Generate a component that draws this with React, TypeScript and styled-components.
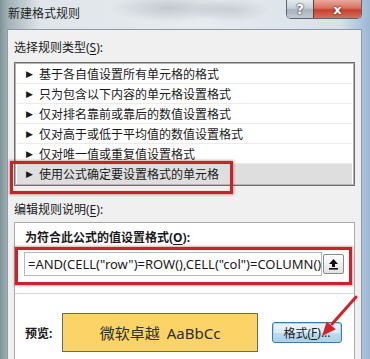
import React from "react";
import styled, { createGlobalStyle } from "styled-components";

const Global = createGlobalStyle`
  html, body { margin: 0; padding: 0; }
  body { width: 370px; height: 359px; overflow: hidden; background: #ffffff; }
  * { box-sizing: border-box; }
`;

const FONT = `"Noto Sans", "Noto Sans CJK SC", sans-serif`;

const Window = styled.div`
  position: relative;
  width: 370px;
  height: 359px;
  overflow: hidden;
  display: flex;
  flex-direction: column;
  font-family: ${FONT};
  font-size: 12px;
  color: #1a1a1a;
  background: linear-gradient(90deg, #7f9397 0px, #9fb0b5 7px, #dfe5ea 40px, #e6ebef 200px, #d9e1e8 340px, #a9c2dc 362px, #9db7d4 370px);
`;

const TitleBar = styled.div`
  flex: none;
  height: 29px;
  display: flex;
  align-items: flex-start;
  padding-left: 8px;
  background: radial-gradient(ellipse 60px 14px at 170px 8px, rgba(90, 100, 110, 0.25), transparent),
    radial-gradient(ellipse 40px 12px at 230px 10px, rgba(90, 100, 110, 0.2), transparent);
`;

const Title = styled.div`
  margin-top: 6px;
  line-height: 16px;
  font-size: 12px;
  color: #1e1e1e;
`;

const Captions = styled.div`
  margin-left: auto;
  margin-right: 8px;
  display: flex;
  height: 19px;
  border: 1px solid #5b6470;
  border-top: none;
  border-radius: 0 0 5px 5px;
  overflow: hidden;
`;

const CaptionButton = styled.div<{ $close?: boolean }>`
  width: ${(p) => (p.$close ? 48 : 26)}px;
  height: 100%;
  display: flex;
  align-items: center;
  justify-content: center;
  font-family: "DejaVu Sans", sans-serif;
  font-weight: bold;
  font-size: ${(p) => (p.$close ? 13 : 14)}px;
  color: #ffffff;
  text-shadow: 0 0 2px #333, 0 0 1px #333;
  border-left: ${(p) => (p.$close ? "1px solid #6b3a34" : "none")};
  background: ${(p) =>
    p.$close
      ? "linear-gradient(180deg, #e9a99c 0%, #d9705f 45%, #c4402c 55%, #d8705e 100%)"
      : "linear-gradient(180deg, #e6eaee 0%, #c7cfd7 45%, #a9b3bd 55%, #c2cbd3 100%)"};
`;

const Client = styled.div`
  flex: 1;
  margin: 0 8px 0 7px;
  background: #f0f0f0;
  border: 1px solid #8d99a5;
  border-bottom: none;
  padding: 0 6px;
  display: flex;
  flex-direction: column;
`;

const SectionLabel = styled.div<{ $top: number }>`
  margin-top: ${(p) => p.$top}px;
  line-height: 16px;
  font-size: 12px;
  color: #1a1a1a;
`;

const Key = styled.span`
  text-decoration: underline;
  text-underline-offset: 2px;
`;

const ListBox = styled.div`
  margin-top: 6px;
  border: 1px solid #6f6f6f;
  box-shadow: inset 0 0 0 1px #b4b4b4;
  background: #ffffff;
  padding: 1px 2px 1px 2px;
`;

const ListRow = styled.div<{ $selected?: boolean; $last?: boolean }>`
  position: relative;
  height: 20px;
  display: flex;
  align-items: center;
  padding-left: 9px;
  font-size: 12px;
  color: #1a1a1a;
  background: ${(p) => (p.$selected ? "#dedede" : "transparent")};
  border-bottom: ${(p) => (p.$last ? "none" : "1px solid #ebebeb")};
`;

const Arrow = styled.span`
  font-family: "DejaVu Sans", sans-serif;
  font-size: 9px;
  width: 13px;
  color: #1a1a1a;
`;

const RedMark = styled.div<{ $l: number; $t: number; $w?: number; $r?: number; $b: number }>`
  position: absolute;
  left: ${(p) => p.$l}px;
  top: ${(p) => p.$t}px;
  ${(p) => (p.$w !== undefined ? `width: ${p.$w}px;` : `right: ${p.$r}px;`)}
  bottom: ${(p) => p.$b}px;
  border: 3px solid #c8232b;
  box-shadow: 0 0 2px 1px rgba(120, 20, 20, 0.35), inset 0 0 1px rgba(120, 20, 20, 0.4);
  pointer-events: none;
`;

const Panel = styled.div`
  margin-top: 4px;
  flex: 1;
  background: #ffffff;
  border: 1px solid #a9a9a9;
  border-bottom: none;
  padding: 7px 10px 0 10px;
  display: flex;
  flex-direction: column;
`;

const BoldLabel = styled.div`
  font-weight: bold;
  font-size: 12px;
  line-height: 16px;
  color: #1a1a1a;
`;

const FormulaRow = styled.div`
  position: relative;
  margin-top: 6px;
  margin-left: -1px;
  display: flex;
  align-items: center;
  gap: 1px;
`;

const FormulaInput = styled.div`
  width: 298px;
  height: 24px;
  border: 1px solid #b9b9b9;
  background: #ffffff;
  padding-left: 3px;
  display: flex;
  align-items: center;
  overflow: hidden;
  white-space: nowrap;
  font-size: 13px;
  color: #1a1a1a;
`;

const CollapseButton = styled.div`
  width: 21px;
  height: 20px;
  border: 1px solid #8a8a8a;
  border-radius: 2px;
  background: linear-gradient(180deg, #ffffff 0%, #f0f0f0 50%, #e2e2e2 100%);
  display: flex;
  align-items: center;
  justify-content: center;
`;

const Separator = styled.div`
  margin: 17px -10px 0 -10px;
  height: 1px;
  background: #d5d5d5;
`;

const PreviewRow = styled.div`
  margin-top: 19px;
  display: flex;
  align-items: center;
`;

const PreviewLabel = styled.div`
  width: 37px;
  font-weight: bold;
  font-size: 12px;
`;

const PreviewBox = styled.div`
  width: 196px;
  height: 39px;
  border: 1px solid #6a6a6a;
  background: #fbd366;
  display: flex;
  align-items: center;
  justify-content: center;
  font-size: 15px;
  color: #2e2e2e;
  gap: 7px;
`;

const FormatButton = styled.div`
  margin-left: 14px;
  width: 70px;
  height: 21px;
  border: 1px solid #3d7bad;
  border-radius: 3px;
  box-shadow: inset 0 0 0 1px #a9d6f3;
  background: linear-gradient(180deg, #eaf4fb 0%, #d9ecf8 50%, #bfdcf0 51%, #a9d0ec 100%);
  display: flex;
  align-items: center;
  justify-content: center;
  font-size: 12px;
  color: #1a1a1a;
`;

const ArrowOverlay = styled.svg`
  position: absolute;
  left: 310px;
  top: 285px;
  width: 60px;
  height: 60px;
  pointer-events: none;
`;

const rules = [
  "基于各自值设置所有单元格的格式",
  "只为包含以下内容的单元格设置格式",
  "仅对排名靠前或靠后的数值设置格式",
  "仅对高于或低于平均值的数值设置格式",
  "仅对唯一值或重复值设置格式",
  "使用公式确定要设置格式的单元格",
];

export default function App() {
  return (
    <>
      <Global />
      <Window>
        <TitleBar>
          <Title>新建格式规则</Title>
          <Captions>
            <CaptionButton>?</CaptionButton>
            <CaptionButton $close>x</CaptionButton>
          </Captions>
        </TitleBar>
        <Client>
          <SectionLabel $top={10}>
            选择规则类型(<Key>S</Key>):
          </SectionLabel>
          <ListBox>
            {rules.map((r, i) => {
              const sel = i === rules.length - 1;
              return (
                <ListRow key={r} $selected={sel} $last={sel}>
                  <Arrow>▶</Arrow>
                  {r}
                  {sel && <RedMark $l={-7} $t={-3} $w={223} $b={-10} />}
                </ListRow>
              );
            })}
          </ListBox>
          <SectionLabel $top={16}>
            编辑规则说明(<Key>E</Key>):
          </SectionLabel>
          <Panel>
            <BoldLabel>
              为符合此公式的值设置格式(<Key>O</Key>):
            </BoldLabel>
            <FormulaRow>
              <FormulaInput>=AND(CELL("row")=ROW(),CELL("col")=COLUMN())</FormulaInput>
              <CollapseButton>
                <svg width="11" height="12" viewBox="0 0 11 12">
                  <path d="M5.5 1 L10 6 L7 6 L7 9 L4 9 L4 6 L1 6 Z" fill="#111" />
                  <rect x="1" y="10" width="9" height="1.6" fill="#111" />
                </svg>
              </CollapseButton>
              <RedMark $l={-9} $t={-5} $r={-8} $b={-9} />
            </FormulaRow>
            <Separator />
            <PreviewRow>
              <PreviewLabel>预览:</PreviewLabel>
              <PreviewBox>
                <span>微软卓越</span>
                <span>AaBbCc</span>
              </PreviewBox>
              <FormatButton>
                格式(<Key>F</Key>)...
              </FormatButton>
            </PreviewRow>
          </Panel>
        </Client>
        <ArrowOverlay viewBox="0 0 60 60">
          <line x1="46" y1="12" x2="22" y2="39" stroke="#d3222b" strokeWidth="3" strokeLinecap="round" />
          <polygon points="12,51 25.7,44.3 16.7,36.5" fill="#d3222b" />
        </ArrowOverlay>
      </Window>
    </>
  );
}
